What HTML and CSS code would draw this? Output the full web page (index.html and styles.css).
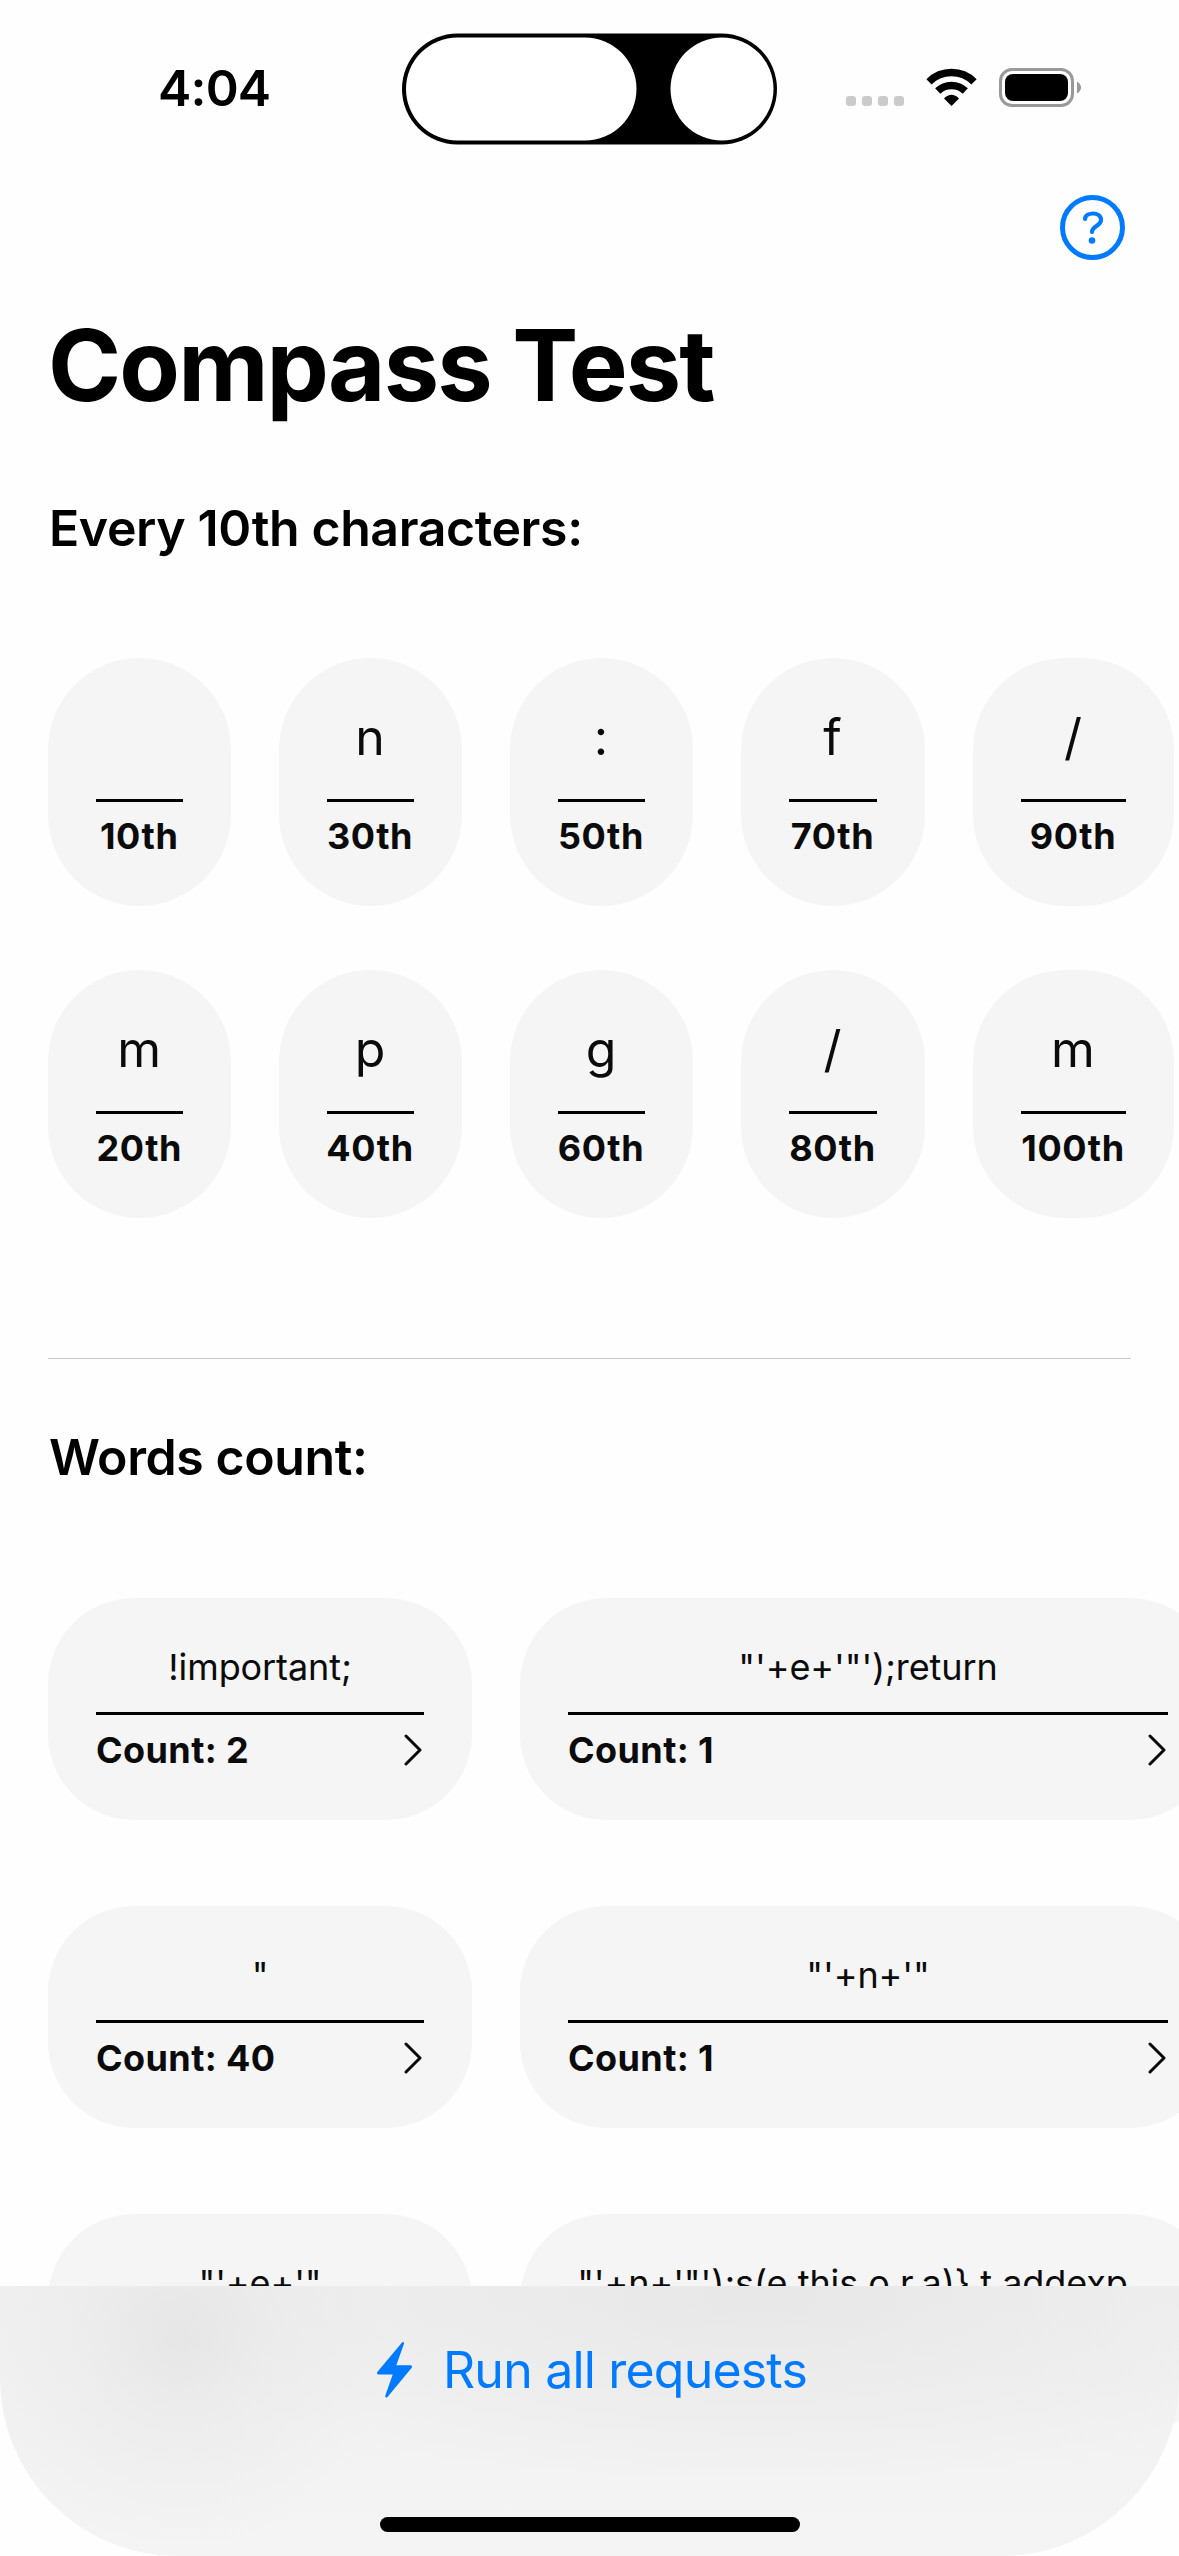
FILE: index.html
```html
<!DOCTYPE html>
<html lang="en">
<head>
<meta charset="utf-8">
<title>Compass Test</title>
<link rel="stylesheet" href="styles.css">
</head>
<body>
<div class="screen">
  <header class="status">
    <span class="time">4:04</span>
    <svg class="island" width="375" height="112" viewBox="0 0 375 112">
      <rect width="375" height="111" y=".5" rx="55.5" fill="#000"/>
      <rect x="4" y="4.500" width="230.500" height="103" rx="51.500" fill="#fff"/>
      <ellipse cx="320" cy="56" rx="51.500" ry="51.500" fill="#fff"/>
    </svg>
    <svg class="indicators" width="240" height="48" viewBox="0 0 240 48">
      <g fill="#cbcbcb"><rect x="0" y="32" width="10" height="10" rx="3"/><rect x="16" y="32" width="10" height="10" rx="3"/><rect x="32" y="32" width="10" height="10" rx="3"/><rect x="48" y="32" width="10" height="10" rx="3"/></g>
      <g fill="none" stroke="#000" stroke-width="7.500"><path d="M83 17.800A32 32 0 0 1 128 17.800"/><path d="M91.700 27A20 20 0 0 1 119.300 27"/></g>
      <path d="M98 34.500Q105.500 27 113 34.500L105.500 42Z"/>
      <rect x="154.500" y="5.500" width="72" height="36" rx="11.500" fill="none" stroke="#999" stroke-width="3"/>
      <rect x="159" y="10" width="63" height="27" rx="8"/>
      <path d="M231 17.500Q235 20 235 23.500T231 29.500Z" fill="#999"/>
    </svg>
  </header>
  <nav class="toolbar">
    <svg width="65" height="65" viewBox="0 0 65 65" fill="none" stroke="#007aff">
      <circle cx="32.500" cy="32.500" r="30" stroke-width="5"/>
      <path d="M25 24C25.500 16.500 41 16.500 41 25C41 31 32 31 32 37" stroke-width="4.200" stroke-linecap="round"/>
      <circle cx="32" cy="45.500" r="3.300" fill="#007aff" stroke="none"/>
    </svg>
  </nav>
  <main>
    <h1>Compass Test</h1>
    <h2>Every 10th characters:</h2>
    <div class="chars">
      <article class="tile"><b>&nbsp;</b><strong>10th</strong></article>
      <article class="tile"><b>n</b><strong>30th</strong></article>
      <article class="tile"><b>:</b><strong>50th</strong></article>
      <article class="tile"><b>f</b><strong>70th</strong></article>
      <article class="tile"><b>/</b><strong>90th</strong></article>
      <article class="tile"><b>m</b><strong>20th</strong></article>
      <article class="tile"><b>p</b><strong>40th</strong></article>
      <article class="tile"><b>g</b><strong>60th</strong></article>
      <article class="tile"><b>/</b><strong>80th</strong></article>
      <article class="tile"><b>m</b><strong>100th</strong></article>
    </div>
    <hr>
    <h2>Words count:</h2>
    <div class="words">
      <article class="word"><span>!important;</span><footer>Count: 2<svg width="18" height="32" viewBox="0 0 18 32"><path d="M2 2L16 16L2 30"/></svg></footer></article>
      <article class="word"><span>"'+e+'"');return</span><footer>Count: 1<svg width="18" height="32" viewBox="0 0 18 32"><path d="M2 2L16 16L2 30"/></svg></footer></article>
      <article class="word"><span>"</span><footer>Count: 40<svg width="18" height="32" viewBox="0 0 18 32"><path d="M2 2L16 16L2 30"/></svg></footer></article>
      <article class="word"><span>"'+n+'"</span><footer>Count: 1<svg width="18" height="32" viewBox="0 0 18 32"><path d="M2 2L16 16L2 30"/></svg></footer></article>
      <article class="word"><span>"'+e+'"</span></article>
      <article class="word"><span>"'+n+'"');s(e,this,o,r,a)},t.addexp…</span></article>
    </div>
  </main>
  <div class="bar">
    <button class="run">
      <svg width="35" height="56" viewBox="0 0 35 56"><path d="M25 .4Q26 -.5 27 .6Q27.200 1.300 26.800 2.300L19.300 23.300H34Q35.500 24 34.700 25.700L10.500 55Q9 56.300 8.300 54.800Q8.100 54 8.500 53L15.700 32.500H1Q-.500 31.500 .3 30Z" fill="#007aff"/></svg>
      <span>Run all requests</span>
    </button>
    <div class="home"></div>
  </div>
</div>
</body>
</html>
```
FILE: styles.css
```css
* { box-sizing: border-box; }
body { margin: 0; background: #fff; color: #000; font-family: Inter, "Liberation Sans", sans-serif; }
.screen { position: relative; width: 1179px; height: 2556px; overflow: hidden; background: #fefefe; }
.status { display: grid; grid-template-columns: 244px 375px 1fr; height: 177px; padding: 33px 0 0 158px; }
.time { font-size: 50px; line-height: 60px; font-weight: 600; letter-spacing: -0.8px; padding-top: 25px; }
.island { display: block; }
.indicators { display: block; margin: 31px 0 0 69px; }
.toolbar { display: flex; justify-content: flex-end; height: 101px; padding: 18px 54px 0 0; }
h1 { margin: 32px 0 0 48px; font-size: 99px; line-height: 110px; font-weight: 700; letter-spacing: -1.9px; }
h2 { margin: 78px 0 0 49px; font-size: 50px; line-height: 60px; font-weight: 600; letter-spacing: -0.4px; white-space: nowrap; }
.chars { display: grid; grid-template-columns: 182.5px 183px 183px 184px 201px; gap: 64px 48px; grid-auto-rows: 248px; padding-left: 48px; margin-top: 100px; }
.tile { display: flex; flex-direction: column; border-radius: 92px; background: #f5f5f5; padding: 49px 48px 0; text-align: center; color: #0b0b0b; }
.tile b { height: 95px; border-bottom: 3px solid #000; font-size: 50px; line-height: 60px; font-weight: 400; }
.tile strong { font-size: 36px; line-height: 44px; font-weight: 700; letter-spacing: 0.6px; margin: 12px -10px 0; white-space: nowrap; }
hr { height: 1px; border: 0; margin: 140px 48px 0; background: #c6c6c8; }
hr + h2 { margin-top: 68px; }
.words { display: grid; grid-template-columns: 424px 696px; grid-auto-rows: 222px; gap: 86px 48px; padding-left: 48px; margin-top: 111px; }
.word { border-radius: 86px; background: #f5f5f5; padding: 47px 48px 0; color: #0b0b0b; }
.word span { display: block; height: 70px; border-bottom: 3px solid #000; text-align: center; font-size: 36px; line-height: 44px; letter-spacing: -0.1px; white-space: nowrap; }
.word footer { display: flex; justify-content: space-between; align-items: center; padding-right: 2px; font-size: 36px; line-height: 44px; font-weight: 700; letter-spacing: 0.4px; margin-top: 13px; }
.word path { fill: none; stroke: #0b0b0b; stroke-width: 3; stroke-linecap: round; stroke-linejoin: round; }
.bar { position: absolute; left: 0; right: 0; bottom: 0; height: 270px; border-radius: 0 0 178px 178px; background: radial-gradient(ellipse 210px 210px at 180px 50px, rgba(226, 226, 226, .7), rgba(232, 232, 232, .4) 50%, rgba(240, 240, 240, 0)), radial-gradient(ellipse 620px 190px at 760px 10px, rgba(228, 228, 228, .7), rgba(232, 232, 232, .5) 50%, rgba(240, 240, 240, 0)), linear-gradient(#f0f0f0, #f4f4f4); }
.run { display: flex; align-items: center; justify-content: center; gap: 31px; width: 100%; height: 168px; border: 0; padding: 0 0 0 5px; background: none; color: #007aff; font: 400 50px/60px Inter, sans-serif; letter-spacing: -0.8px; }
.home { width: 420px; height: 15px; border-radius: 8px; background: #000; margin: 63px auto 0; }
```
